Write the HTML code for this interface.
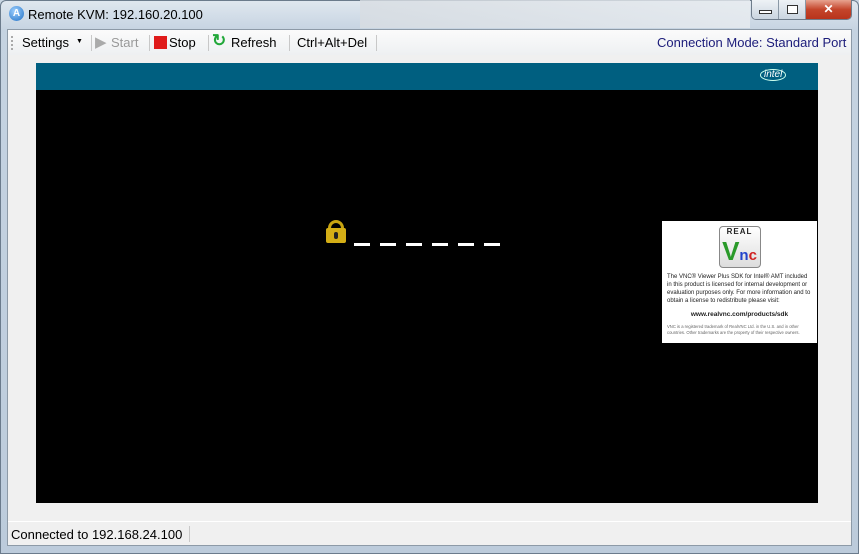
<!DOCTYPE html>
<html><head><meta charset="utf-8"><style>
*{margin:0;padding:0;box-sizing:border-box}
body{width:859px;height:554px;overflow:hidden;background:#c9d6e3;font-family:"Liberation Sans",sans-serif;position:relative}
.frame{position:absolute;left:0;top:0;width:859px;height:554px;background:linear-gradient(#dfe7ef,#c5d3e1 30px,#bccbdb);border:1px solid #6b7b8c;border-radius:6px 6px 0 0}
.blur{position:absolute;left:360px;top:0;width:390px;height:28px;background:linear-gradient(90deg,#d8dde2,#e8ecf0);opacity:.8}
.title{position:absolute;left:28px;top:7px;font-size:13px;color:#000}
.icon{position:absolute;left:9px;top:6px;width:15px;height:15px;border-radius:50%;background:radial-gradient(circle at 40% 35%,#9fd0ff,#1f6fc4);color:#fff;font-size:10px;font-weight:bold;text-align:center;line-height:15px}
.btns{position:absolute;left:751px;top:0;width:101px;height:20px;border:1px solid #6e7c8b;border-top:none;border-radius:0 0 5px 5px;overflow:hidden;display:flex}
.btns div{height:19px;background:linear-gradient(#eef2f6,#cad5e0);border-right:1px solid #8a98a6}
.btns .x{background:linear-gradient(#e7a38f,#c4452b 50%,#b8331c);border:none;color:#fff;font-weight:bold;text-align:center;font-size:12px;line-height:19px}
.client{position:absolute;left:7px;top:29px;width:845px;height:517px;background:#f0f0f0;border:1px solid #8d9aa7}
.tb{position:absolute;left:0;top:0;width:843px;height:25px;background:linear-gradient(#fbfbfb,#eef0f2);font-size:13px}
.tb span{position:absolute;top:5px}
.sep{position:absolute;top:5px;width:1px;height:16px;background:#c8c8c8}
.screen{position:absolute;left:28px;top:33px;width:782px;height:440px;background:#000}
.hdr{position:absolute;left:0;top:0;width:782px;height:27px;background:#005f80}
.status{position:absolute;left:0;top:491px;width:843px;height:24px;background:#f0f0f0;border-top:1px solid #fff;font-size:13px}
.vnc{position:absolute;left:626px;top:158px;width:155px;height:122px;background:#fff;font-size:6px;line-height:8px;color:#222;padding:0 5px}
.dash{position:absolute;top:180px;width:16px;height:3px;background:#fff}
</style></head><body>
<div class="frame"></div>
<div class="blur"></div>
<div class="icon">A</div>
<div class="title">Remote KVM: 192.160.20.100</div>
<div class="btns"><div style="width:27px"><div style="margin:10px 7px 0;width:13px;height:4px;background:#fff;border:1px solid #333"></div></div><div style="width:27px"><div style="margin:5px 8px 0;width:11px;height:9px;border:1px solid #333;background:#fff"></div></div><div class="x" style="width:47px">✕</div></div>
<div class="client">
 <div class="tb">
  <div style="position:absolute;left:3px;top:6px;width:2px;height:14px;border-left:2px dotted #aaa"></div>
  <span style="left:14px">Settings</span><span style="left:68px;top:8px;font-size:7px">▼</span>
  <div class="sep" style="left:83px"></div>
  <span style="left:87px;top:3px;color:#aaa;font-size:15px">▶</span><span style="left:103px;color:#999">Start</span>
  <div class="sep" style="left:141px"></div>
  <div style="position:absolute;left:146px;top:6px;width:13px;height:13px;background:#e01b1b"></div><span style="left:161px">Stop</span>
  <div class="sep" style="left:200px"></div>
  <span style="left:204px;top:1px;color:#22a83a;font-size:17px;font-weight:bold">↻</span><span style="left:223px">Refresh</span>
  <div class="sep" style="left:281px"></div>
  <span style="left:289px">Ctrl+Alt+Del</span>
  <div class="sep" style="left:368px"></div>
  <span style="left:649px;color:#1c1c7a">Connection Mode: Standard Port</span>
 </div>
 <div class="screen">
  <div class="hdr"><span style="position:absolute;left:724px;top:6px;color:#fff;font-size:10px;font-style:italic;border:1px solid #cfe;border-radius:50%;padding:0 3px;line-height:10px">intel</span></div>
  <div style="position:absolute;top:157px;left:292px;width:16px;height:14px;border:3px solid #c8a411;border-bottom:none;border-radius:8px 8px 0 0"></div>
  <div style="position:absolute;left:290px;top:165px;width:20px;height:15px;background:#d4ae16;border-radius:2px"><div style="margin:4px auto;width:4px;height:7px;background:#222;border-radius:2px"></div></div>
  <div class="dash" style="left:318px"></div><div class="dash" style="left:344px"></div><div class="dash" style="left:370px"></div><div class="dash" style="left:396px"></div><div class="dash" style="left:422px"></div><div class="dash" style="left:448px"></div>
  <div class="vnc">
   <div style="margin:5px auto 5px;width:42px;height:42px;border:1px solid #888;border-radius:4px;background:linear-gradient(#fff,#ddd);text-align:center;font-weight:bold;font-size:8px;line-height:10px;letter-spacing:1px">REAL<br><span style="font-size:26px;line-height:28px;color:#2a9a2a;letter-spacing:0">V<span style="color:#2244cc;font-size:15px">n</span><span style="color:#d02020;font-size:15px">c</span></span></div>
   The VNC® Viewer Plus SDK for Intel® AMT included in this product is licensed for internal development or evaluation purposes only. For more information and to obtain a license to redistribute please visit:
   <div style="text-align:center;font-weight:bold;margin:6px 0 5px;font-size:6.5px">www.realvnc.com/products/sdk</div>
   <div style="font-size:4.2px;line-height:5.5px;color:#666">VNC is a registered trademark of RealVNC Ltd. in the U.S. and in other countries. Other trademarks are the property of their respective owners.</div>
  </div>
 </div>
 <div class="status"><span style="position:absolute;left:3px;top:5px">Connected to 192.168.24.100</span><div class="sep" style="left:181px;top:4px"></div></div>
</div>
</body></html>
